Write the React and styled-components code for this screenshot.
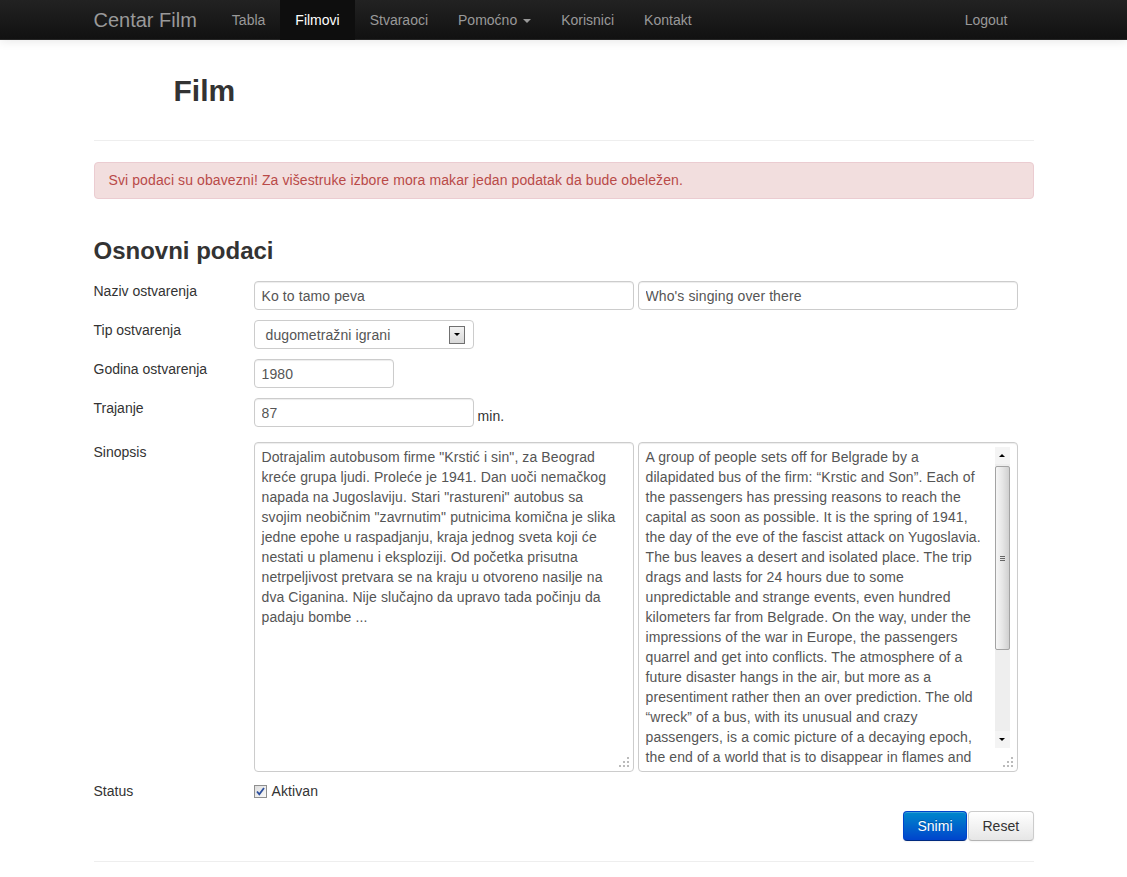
import React from "react";
import styled, { createGlobalStyle } from "styled-components";

const sinopsisSr = `Dotrajalim autobusom firme "Krstić i sin", za Beograd
kreće grupa ljudi. Proleće je 1941. Dan uoči nemačkog
napada na Jugoslaviju. Stari "rastureni" autobus sa
svojim neobičnim "zavrnutim" putnicima komična je slika
jedne epohe u raspadjanju, kraja jednog sveta koji će
nestati u plamenu i eksploziji. Od početka prisutna
netrpeljivost pretvara se na kraju u otvoreno nasilje na
dva Ciganina. Nije slučajno da upravo tada počinju da
padaju bombe ...`;

const sinopsisEn = `A group of people sets off for Belgrade by a
dilapidated bus of the firm: “Krstic and Son”. Each of
the passengers has pressing reasons to reach the
capital as soon as possible. It is the spring of 1941,
the day of the eve of the fascist attack on Yugoslavia.
The bus leaves a desert and isolated place. The trip
drags and lasts for 24 hours due to some
unpredictable and strange events, even hundred
kilometers far from Belgrade. On the way, under the
impressions of the war in Europe, the passengers
quarrel and get into conflicts. The atmosphere of a
future disaster hangs in the air, but more as a
presentiment rather then an over prediction. The old
“wreck” of a bus, with its unusual and crazy
passengers, is a comic picture of a decaying epoch,
the end of a world that is to disappear in flames and
explosions. The intolerance present from the very
beginning turns at the end into an open violence
against two Gypsies. It is not a coincidence that
exactly at that moment the bombs start falling ...`;

const GlobalStyle = createGlobalStyle`
  html, body {
    margin: 0;
    padding: 0;
    overflow: hidden;
    background: #fff;
  }
  body {
    font-family: "Liberation Sans", Arial, sans-serif;
    font-size: 14px;
    line-height: 20px;
    color: #333;
  }
`;

const Navbar = styled.div`
  height: 40px;
  background: linear-gradient(to bottom, #222222, #111111);
  border-bottom: 1px solid #252525;
  box-sizing: border-box;
  box-shadow: 0 1px 10px rgba(0, 0, 0, 0.1);
`;

const NavInner = styled.div`
  width: 940px;
  margin: 0 auto;
  display: flex;
  align-items: stretch;
  height: 39px;
`;

const Brand = styled.div`
  font-size: 20px;
  line-height: 40px;
  color: #999;
  padding-right: 20px;
`;

const NavList = styled.div`
  display: flex;
  flex: 1;
`;

const NavItem = styled.div`
  padding: 0 15px;
  line-height: 40px;
  height: 40px;
  color: ${(p) => (p.$active ? "#fff" : "#999")};
  background: ${(p) => (p.$active ? "#0e0e0e" : "transparent")};
  display: flex;
  align-items: center;
  gap: 6px;
`;

const Caret = styled.span`
  width: 0;
  height: 0;
  border-left: 4px solid transparent;
  border-right: 4px solid transparent;
  border-top: 4px solid #999;
  margin-top: 2px;
`;

const NavRight = styled.div`
  display: flex;
  padding-right: 11px;
`;

const Container = styled.div`
  width: 940px;
  margin: 0 auto;
  letter-spacing: 0.1px;
`;

const PageTitle = styled.h1`
  margin: 31px 0 0;
  padding-left: 80px;
  font-size: 30px;
  line-height: 40px;
  font-weight: bold;
  color: #333;
  letter-spacing: 0;
`;

const Rule = styled.hr`
  border: 0;
  border-top: 1px solid #eee;
  margin: ${(p) => p.$margin || "29px 0 0"};
`;

const Alert = styled.div`
  margin-top: 21px;
  padding: 8px 14px;
  line-height: 19px;
  background: #f2dede;
  border: 1px solid #ebccd1;
  border-radius: 4px;
  color: #b94a48;
`;

const SectionTitle = styled.h3`
  margin: 37px 0 0;
  font-size: 24px;
  line-height: 30px;
  font-weight: bold;
  color: #333;
  letter-spacing: 0;
`;

const Form = styled.div`
  margin-top: 15px;
  display: flex;
  flex-direction: column;
`;

const Row = styled.div`
  display: flex;
  align-items: ${(p) => (p.$center ? "center" : "flex-start")};
  margin-bottom: ${(p) => p.$mb || "10px"};
`;

const Label = styled.div`
  width: 160px;
  flex-shrink: 0;
  padding-top: 0;
  color: #333;
  letter-spacing: 0;
`;

const Fields = styled.div`
  display: flex;
  align-items: flex-end;
  gap: 4px;
`;

const TextInput = styled.input`
  width: ${(p) => p.$w}px;
  height: 29px;
  box-sizing: border-box;
  border: 1px solid #ccc;
  border-radius: 4px;
  padding: 0 7px;
  font-family: "Liberation Sans", Arial, sans-serif;
  font-size: 14px;
  letter-spacing: 0.1px;
  color: #555;
  background: #fff;
  box-shadow: inset 0 1px 1px rgba(0, 0, 0, 0.075);
  outline: none;
`;

const Unit = styled.span`
  color: #333;
  line-height: 20px;
  margin-bottom: 1px;
`;

const SelectBox = styled.div`
  width: 220px;
  height: 29px;
  box-sizing: border-box;
  border: 1px solid #ccc;
  border-radius: 4px;
  display: flex;
  align-items: center;
  justify-content: space-between;
  padding: 0 8px 0 11px;
  color: #555;
  background: #fff;
`;

const SelectButton = styled.div`
  width: 16px;
  height: 18px;
  box-sizing: border-box;
  border: 1px solid #707070;
  background: linear-gradient(to bottom, #f2f2f2, #d8d8d8);
  display: flex;
  align-items: center;
  justify-content: center;
`;

const Arrow = styled.span`
  width: 0;
  height: 0;
  border-left: 3px solid transparent;
  border-right: 3px solid transparent;
  ${(p) => (p.$up ? "border-bottom: 3px solid #000;" : "border-top: 3px solid #000;")}
`;

const AreaBox = styled.div`
  position: relative;
  width: 380px;
  height: 330px;
  box-sizing: border-box;
  border: 1px solid #ccc;
  border-radius: 4px;
  background: #fff;
  box-shadow: inset 0 1px 1px rgba(0, 0, 0, 0.075);
  display: flex;
  padding: 4px 7px 4px 0;
`;

const AreaText = styled.textarea`
  flex: 1;
  border: 0;
  outline: none;
  resize: none;
  overflow: hidden;
  padding: 0 0 0 7px;
  margin: 0;
  background: transparent;
  font-family: "Liberation Sans", Arial, sans-serif;
  font-size: 14px;
  line-height: 20px;
  letter-spacing: 0.1px;
  color: #555;
  white-space: pre;
`;

const Scrollbar = styled.div`
  width: 15px;
  height: 301px;
  flex-shrink: 0;
  display: flex;
  flex-direction: column;
  background: #f0f0f0;
`;

const ScrollButton = styled.div`
  height: 17px;
  display: flex;
  align-items: center;
  justify-content: center;
  background: #f4f4f4;
`;

const Track = styled.div`
  flex: 1;
  background: #eeeeee;
  padding: 2px 0 0;
`;

const Thumb = styled.div`
  height: 184px;
  box-sizing: border-box;
  border: 1px solid #a3a3a3;
  border-radius: 2px;
  background: linear-gradient(to right, #f6f6f6, #e6e6e6 50%, #d0d0d0);
  display: flex;
  align-items: center;
  justify-content: center;
`;

const Grip = styled.div`
  width: 5px;
  height: 5px;
  border-top: 1px solid #666;
  border-bottom: 1px solid #666;
  position: relative;
  box-sizing: border-box;
  &::after {
    content: "";
    position: absolute;
    left: 0;
    right: 0;
    top: 1px;
    border-top: 1px solid #666;
  }
`;

const ResizeGrip = styled.svg`
  position: absolute;
  right: 4px;
  bottom: 4px;
`;

const CheckRow = styled.label`
  display: flex;
  align-items: center;
  gap: 5px;
  color: #333;
`;

const Actions = styled.div`
  display: flex;
  justify-content: flex-end;
  margin-top: 10px;
`;

const Button = styled.button`
  height: 30px;
  padding: 0 14px;
  font-family: "Liberation Sans", Arial, sans-serif;
  font-size: 14px;
  border-radius: 4px;
  border: 1px solid;
  cursor: pointer;
  ${(p) =>
    p.$primary
      ? `
    color: #fff;
    background: linear-gradient(to bottom, #0088cc, #0044cc);
    border-color: #0044cc #0044cc #002a80;
    text-shadow: 0 -1px 0 rgba(0,0,0,0.25);
    width: 64px;
  `
      : `
    color: #333;
    background: linear-gradient(to bottom, #ffffff, #e6e6e6);
    border-color: #cccccc #cccccc #b3b3b3;
    width: 66px;
    margin-left: 1px;
  `}
  box-shadow: inset 0 1px 0 rgba(255, 255, 255, 0.2), 0 1px 2px rgba(0, 0, 0, 0.05);
`;

function Dots() {
  const pts = [
    [9, 1],
    [5, 5],
    [9, 5],
    [1, 9],
    [5, 9],
    [9, 9],
  ];
  return (
    <ResizeGrip width="11" height="11" viewBox="0 0 11 11">
      {pts.map(([x, y]) => (
        <rect key={`${x}-${y}`} x={x} y={y} width="2" height="2" fill="#bbb" />
      ))}
    </ResizeGrip>
  );
}

function CheckBox() {
  return (
    <svg width="13" height="13" viewBox="0 0 13 13">
      <defs>
        <linearGradient id="cb" x1="0" y1="0" x2="1" y2="1">
          <stop offset="0" stopColor="#dcdcdc" />
          <stop offset="1" stopColor="#fbfbfb" />
        </linearGradient>
      </defs>
      <rect x="0.5" y="0.5" width="12" height="12" fill="url(#cb)" stroke="#8f8f8f" />
      <path d="M3 6.5 L5.3 9.3 L10 3" fill="none" stroke="#2c4f9e" strokeWidth="1.8" />
    </svg>
  );
}

export default function App() {
  return (
    <>
      <GlobalStyle />
      <Navbar>
        <NavInner>
          <Brand>Centar Film</Brand>
          <NavList>
            <NavItem>Tabla</NavItem>
            <NavItem $active>Filmovi</NavItem>
            <NavItem>Stvaraoci</NavItem>
            <NavItem>
              Pomoćno <Caret />
            </NavItem>
            <NavItem>Korisnici</NavItem>
            <NavItem>Kontakt</NavItem>
          </NavList>
          <NavRight>
            <NavItem>Logout</NavItem>
          </NavRight>
        </NavInner>
      </Navbar>

      <Container>
        <PageTitle>Film</PageTitle>
        <Rule />
        <Alert>
          Svi podaci su obavezni! Za višestruke izbore mora makar jedan podatak da bude obeležen.
        </Alert>

        <SectionTitle>Osnovni podaci</SectionTitle>

        <Form>
          <Row>
            <Label>Naziv ostvarenja</Label>
            <Fields>
              <TextInput $w={380} readOnly defaultValue="Ko to tamo peva" />
              <TextInput $w={380} readOnly defaultValue="Who's singing over there" />
            </Fields>
          </Row>
          <Row>
            <Label>Tip ostvarenja</Label>
            <SelectBox>
              <span>dugometražni igrani</span>
              <SelectButton>
                <Arrow />
              </SelectButton>
            </SelectBox>
          </Row>
          <Row>
            <Label>Godina ostvarenja</Label>
            <TextInput $w={140} readOnly defaultValue="1980" />
          </Row>
          <Row $mb="15px">
            <Label>Trajanje</Label>
            <Fields>
              <TextInput $w={220} readOnly defaultValue="87" />
              <Unit>min.</Unit>
            </Fields>
          </Row>
          <Row $mb="9px">
            <Label>Sinopsis</Label>
            <Fields>
              <AreaBox>
                <AreaText readOnly defaultValue={sinopsisSr} />
                <Dots />
              </AreaBox>
              <AreaBox>
                <AreaText readOnly defaultValue={sinopsisEn} />
                <Scrollbar>
                  <ScrollButton>
                    <Arrow $up />
                  </ScrollButton>
                  <Track>
                    <Thumb>
                      <Grip />
                    </Thumb>
                  </Track>
                  <ScrollButton>
                    <Arrow />
                  </ScrollButton>
                </Scrollbar>
                <Dots />
              </AreaBox>
            </Fields>
          </Row>
          <Row $center $mb="0">
            <Label>Status</Label>
            <CheckRow>
              <CheckBox />
              Aktivan
            </CheckRow>
          </Row>
        </Form>

        <Actions>
          <Button $primary>Snimi</Button>
          <Button>Reset</Button>
        </Actions>
        <Rule $margin="20px 0 0" />
      </Container>
    </>
  );
}
